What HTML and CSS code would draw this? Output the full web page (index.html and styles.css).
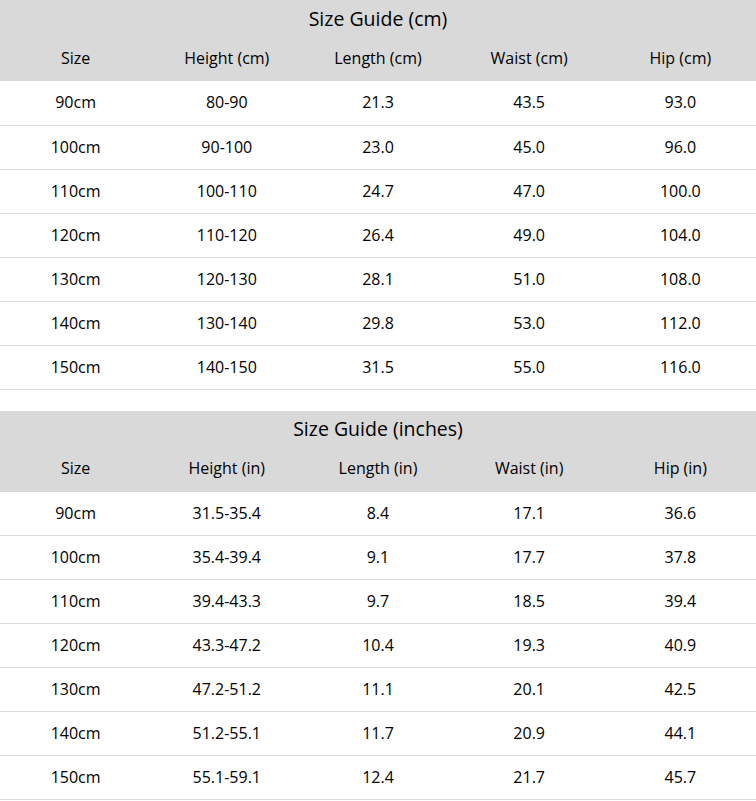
FILE: index.html
```html
<!DOCTYPE html>
<html lang="en">
<head>
<meta charset="utf-8">
<title>Size Guide</title>
<link rel="stylesheet" href="styles.css">
</head>
<body>
<table class="guide">
  <thead>
    <tr class="title-row"><th colspan="5">Size Guide (cm)</th></tr>
    <tr class="col-row"><th>Size</th><th>Height (cm)</th><th>Length (cm)</th><th>Waist (cm)</th><th>Hip (cm)</th></tr>
  </thead>
  <tbody>
    <tr><td>90cm</td><td>80-90</td><td>21.3</td><td>43.5</td><td>93.0</td></tr>
    <tr><td>100cm</td><td>90-100</td><td>23.0</td><td>45.0</td><td>96.0</td></tr>
    <tr><td>110cm</td><td>100-110</td><td>24.7</td><td>47.0</td><td>100.0</td></tr>
    <tr><td>120cm</td><td>110-120</td><td>26.4</td><td>49.0</td><td>104.0</td></tr>
    <tr><td>130cm</td><td>120-130</td><td>28.1</td><td>51.0</td><td>108.0</td></tr>
    <tr><td>140cm</td><td>130-140</td><td>29.8</td><td>53.0</td><td>112.0</td></tr>
    <tr><td>150cm</td><td>140-150</td><td>31.5</td><td>55.0</td><td>116.0</td></tr>
  </tbody>
</table>
<table class="guide second">
  <thead>
    <tr class="title-row"><th colspan="5">Size Guide (inches)</th></tr>
    <tr class="col-row"><th>Size</th><th>Height (in)</th><th>Length (in)</th><th>Waist (in)</th><th>Hip (in)</th></tr>
  </thead>
  <tbody>
    <tr><td>90cm</td><td>31.5-35.4</td><td>8.4</td><td>17.1</td><td>36.6</td></tr>
    <tr><td>100cm</td><td>35.4-39.4</td><td>9.1</td><td>17.7</td><td>37.8</td></tr>
    <tr><td>110cm</td><td>39.4-43.3</td><td>9.7</td><td>18.5</td><td>39.4</td></tr>
    <tr><td>120cm</td><td>43.3-47.2</td><td>10.4</td><td>19.3</td><td>40.9</td></tr>
    <tr><td>130cm</td><td>47.2-51.2</td><td>11.1</td><td>20.1</td><td>42.5</td></tr>
    <tr><td>140cm</td><td>51.2-55.1</td><td>11.7</td><td>20.9</td><td>44.1</td></tr>
    <tr><td>150cm</td><td>55.1-59.1</td><td>12.4</td><td>21.7</td><td>45.7</td></tr>
  </tbody>
</table>
</body>
</html>
```
FILE: styles.css
```css
html, body {
  margin: 0;
  padding: 0;
  background: #fff;
}
body {
  font-family: "Open Sans", "Noto Sans", "Liberation Sans", sans-serif;
  color: #000;
}
.guide {
  width: 756px;
  border-collapse: collapse;
  table-layout: fixed;
}
.guide.second {
  margin-top: 21px;
}
.guide thead tr {
  background: #d9d9d9;
}
.guide th {
  font-weight: normal;
  padding: 0;
  text-align: center;
}
.title-row th {
  height: 36px;
  font-size: 19.5px;
  padding-top: 1px;
  padding-bottom: 1px;
  box-sizing: border-box;
}
.col-row th {
  height: 45px;
  font-size: 16px;
  padding-bottom: 2px;
  box-sizing: border-box;
}
.guide td {
  height: 44px;
  padding: 0 0 1px;
  box-sizing: border-box;
  text-align: center;
  font-size: 16px;
  border-bottom: 1px solid #dcdcdc;
}
```
